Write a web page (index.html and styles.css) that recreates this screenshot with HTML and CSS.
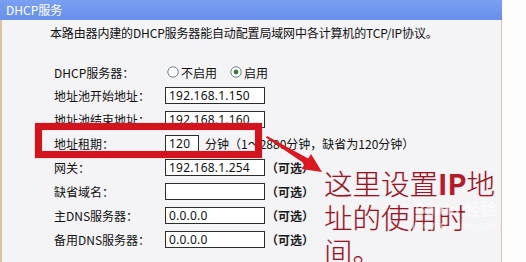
FILE: index.html
```html
<!DOCTYPE html>
<html lang="zh-CN">
<head>
<meta charset="utf-8">
<title>DHCP服务</title>
<link rel="stylesheet" href="styles.css">
</head>
<body>
<div class="page">
  <div class="panel">
    <div class="panel-head">DHCP服务</div>
    <div class="panel-body">
      <p class="intro">本路由器内建的DHCP服务器能自动配置局域网中各计算机的TCP/IP协议。</p>
      <div class="form">
        <div class="row row-first">
          <span class="label">DHCP服务器：</span>
          <span class="radio"><svg class="radio-icon" viewBox="0 0 12 12"><circle cx="6" cy="6" r="5.2" fill="#fff" stroke="#6f7f90" stroke-width="1"/></svg>不启用</span>
          <span class="radio"><svg class="radio-icon" viewBox="0 0 12 12"><circle cx="6" cy="6" r="5.2" fill="#fff" stroke="#6f7f90" stroke-width="1"/><circle cx="6" cy="6" r="2.4" fill="#3d7a3a"/></svg>启用</span>
        </div>
        <div class="row"><span class="label">地址池开始地址：</span><span class="field">192.168.1.150</span></div>
        <div class="row"><span class="label">地址池结束地址：</span><span class="field">192.168.1.160</span></div>
        <div class="row"><span class="label">地址租期：</span><span class="field field-short">120</span><span class="unit">分钟</span><span class="hint">（1～2880分钟，缺省为120分钟）</span></div>
        <div class="row"><span class="label">网关：</span><span class="field">192.168.1.254</span><span class="opt">（可选）</span></div>
        <div class="row"><span class="label">缺省域名：</span><span class="field"></span><span class="opt">（可选）</span></div>
        <div class="row"><span class="label">主DNS服务器：</span><span class="field">0.0.0.0</span><span class="opt">（可选）</span></div>
        <div class="row"><span class="label">备用DNS服务器：</span><span class="field">0.0.0.0</span><span class="opt">（可选）</span></div>
      </div>
    </div>
  </div>

  <div class="mark-box"></div>
  <svg class="mark-arrow" viewBox="0 0 70 45" width="70" height="45">
    <polygon points="0,1.5 1,0 44,23.5 40.5,29" fill="#d9181f"/>
    <polygon points="56,36 35.5,33 45,18" fill="#d9181f"/>
  </svg>
  <div class="note">这里设置<b>IP</b>地<br>址的使用时<br>间。</div>
  <div class="watermark"><span class="wm-logo">Bai<span class="wm-du">du</span> 经验</span><span class="wm-url">jingyan.baidu.com</span></div>
</div>
</body>
</html>
```

FILE: styles.css
```css
html, body {
  margin: 0;
  padding: 0;
  background: #fdfdfd;
}

.page {
  position: relative;
  width: 526px;
  height: 262px;
  overflow: hidden;
  font-family: "Noto Sans CJK SC", "Noto Sans", sans-serif;
  font-size: 12px;
  color: #111;
}

.panel {
  width: 502px;
}

.panel-head {
  height: 20px;
  line-height: 20px;
  padding-left: 6px;
  background: linear-gradient(#7aa0f2, #6890ec);
  color: #fff;
  font-size: 12px;
}

.panel-body {
  background: #f4f3f6;
  border-left: 2px solid #dcc1a2;
  border-right: 1px solid #d9c3a6;
  padding: 5px 0 20px 48px;
  height: 300px;
}

.intro {
  margin: 0;
  line-height: 16px;
  white-space: nowrap;
  letter-spacing: -0.15px;
}

.form {
  margin-top: 20px;
  padding-left: 4px;
}

.row {
  display: flex;
  align-items: center;
  height: 24px;
  white-space: nowrap;
}

.row-first {
  height: 22px;
}

.label {
  width: 111px;
  flex: none;
}

.radio {
  display: inline-flex;
  align-items: center;
  margin-right: 11px;
}

.radio-icon {
  width: 12px;
  height: 12px;
  margin-left: 2px;
  margin-right: 2px;
}

.field {
  box-sizing: border-box;
  width: 100px;
  height: 17px;
  line-height: 15px;
  padding-left: 3px;
  background: #fff;
  border: 1px solid #2c2c2c;
  font-family: "Noto Sans", "Noto Sans CJK SC", sans-serif;
  font-size: 12px;
  letter-spacing: 0.2px;
}

.field-short {
  width: 34px;
}

.unit {
  margin-left: 6px;
}

.opt {
  margin-left: 1px;
  font-weight: bold;
  color: #1a1a1a;
}

.mark-box {
  position: absolute;
  left: 35px;
  top: 123px;
  width: 213px;
  height: 21px;
  border: 7px solid #d3141d;
  box-shadow: 0 0 1px #e8787c, inset 0 0 1px #e8787c;
}

.mark-arrow {
  position: absolute;
  left: 266px;
  top: 136px;
}

.note {
  position: absolute;
  left: 324px;
  top: 166px;
  font-size: 28.5px;
  font-weight: 300;
  line-height: 34px;
  color: #8e1a28;
  text-shadow: 0 0 1px #f2b0b6;
  white-space: nowrap;
}

.note b {
  font-weight: bold;
  color: #b01c2c;
}

.watermark {
  position: absolute;
  left: 412px;
  top: 200px;
  display: flex;
  flex-direction: column;
  align-items: center;
  color: rgba(255, 255, 255, 0.6);
  font-family: "Noto Sans", "Noto Sans CJK SC", sans-serif;
}

.wm-logo {
  font-size: 16px;
  font-weight: bold;
  line-height: 18px;
}

.wm-url {
  font-size: 10px;
  line-height: 14px;
}
```
